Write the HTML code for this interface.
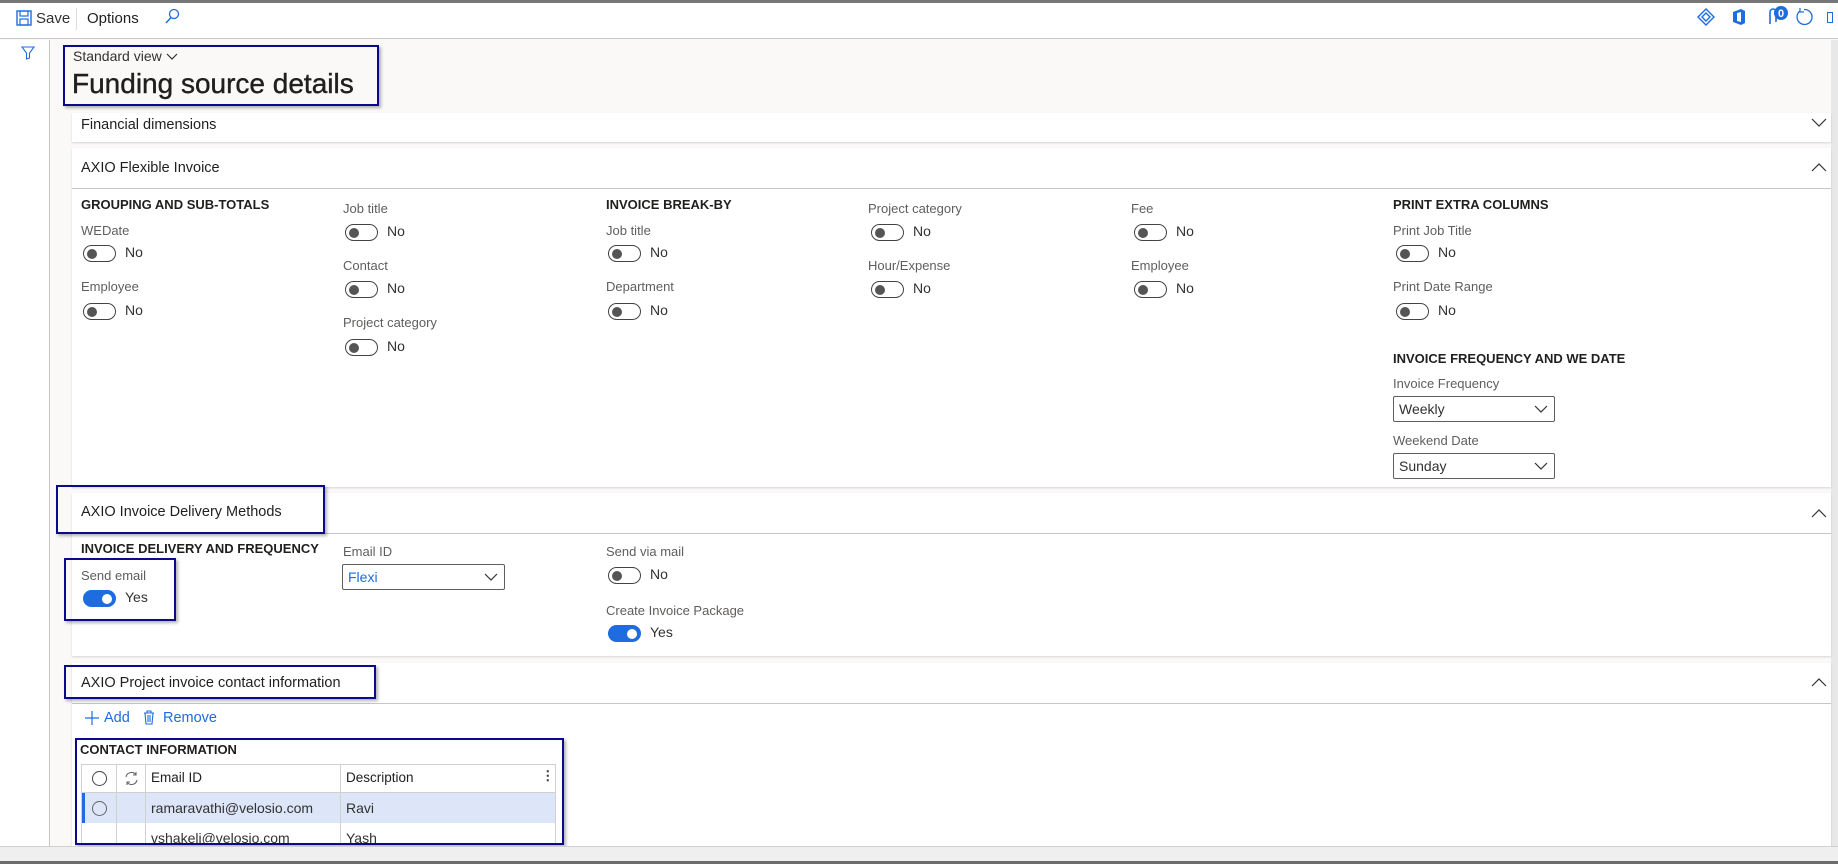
<!DOCTYPE html>
<html><head><meta charset="utf-8"><style>
*{box-sizing:border-box;margin:0;padding:0}
body{width:1838px;height:864px;overflow:hidden;background:#faf9f8;font-family:"Liberation Sans",sans-serif;color:#323130;position:relative}
.a{position:absolute;white-space:nowrap}
.l{position:absolute;font-size:13px;line-height:16px;color:#605e5c;white-space:nowrap}
.h{position:absolute;font-size:13px;line-height:16px;font-weight:bold;color:#201f1e;white-space:nowrap}
.tg{position:absolute;width:33px;height:17px;border:1.5px solid #444;border-radius:9px}
.tg:before{content:"";position:absolute;left:3px;top:2.5px;width:10px;height:10px;border-radius:50%;background:#555}
.tg span{position:absolute;left:41px;top:-2px;font-size:14px;color:#323130}
.tg.on{background:#1e6ce0;border-color:#1e6ce0}
.tg.on:before{left:auto;right:3px;background:#fff}
.card{position:absolute;left:72px;right:7px;background:#fff;box-shadow:0 1px 2px rgba(0,0,0,.15)}
.ct{position:absolute;left:9px;font-size:14.5px;color:#201f1e}
.hl{position:absolute;left:0;right:0;border-top:1px solid #c8c6c4}
.sel{position:absolute;height:26px;border:1px solid #605e5c;border-radius:2px;background:#fff;font-size:14px;line-height:24px;padding-left:5px}
.sel svg{position:absolute;right:6px;top:8px}
.box{position:absolute;border:2px solid #0a0a8a;box-shadow:2px 2px 3px rgba(0,0,0,.3)}
.g{position:absolute;font-size:13.5px;color:#323130}
</style></head><body>
<div class="a" style="left:0;top:0;width:1838px;height:3px;background:#777"></div>
<div class="a" style="left:0;top:3px;width:1838px;height:36px;background:#fff;border-bottom:1px solid #c8c6c4"></div>
<svg class="a" style="left:16px;top:10px" width="16" height="16" viewBox="0 0 16 16"><rect x="1" y="1" width="14" height="14" fill="none" stroke="#1e6ce0" stroke-width="1.4"/><rect x="4" y="1" width="8" height="5" fill="none" stroke="#1e6ce0" stroke-width="1.2"/><rect x="4" y="9" width="8" height="6" fill="none" stroke="#1e6ce0" stroke-width="1.2"/></svg>
<div class="a" style="left:36px;top:10px;font-size:15px">Save</div>
<div class="a" style="left:76px;top:8px;width:1px;height:22px;background:#ddd"></div>
<div class="a" style="left:87px;top:10px;font-size:15px;color:#201f1e">Options</div>
<svg class="a" style="left:164px;top:8px" width="16" height="16" viewBox="0 0 16 16"><circle cx="10" cy="6" r="4.5" fill="none" stroke="#1e6ce0" stroke-width="1.3"/><path d="M7 9.5L2 15" stroke="#1e6ce0" stroke-width="1.4"/></svg>
<svg class="a" style="left:1697px;top:8px" width="18" height="18" viewBox="0 0 18 18"><path d="M9 1L17 9L9 17L1 9Z M9 5L13 9L9 13L5 9Z" fill="none" stroke="#1e6ce0" stroke-width="1.4"/></svg>
<svg class="a" style="left:1731px;top:8px" width="16" height="18" viewBox="0 0 16 18"><path d="M2 4L10 1L14 3V15L10 17L2 14Z" fill="#1e6ce0"/><path d="M6 5L10 4V14L6 13Z" fill="#fff"/></svg>
<svg class="a" style="left:1767px;top:6px" width="22" height="20" viewBox="0 0 22 20"><path d="M3 18V6a3 3 0 0 1 6 0v10" fill="none" stroke="#1e6ce0" stroke-width="1.6"/><circle cx="14" cy="7" r="7" fill="#1e6ce0"/><text x="14" y="11" font-size="11" font-weight="bold" fill="#fff" text-anchor="middle" font-family="Liberation Sans">0</text></svg>
<svg class="a" style="left:1795px;top:8px" width="18" height="18" viewBox="0 0 18 18"><path d="M5 3A7.5 7.5 0 1 0 9 1.5" fill="none" stroke="#1e6ce0" stroke-width="1.3"/><path d="M5 0V4H9" fill="none" stroke="#1e6ce0" stroke-width="1.2"/></svg>
<div class="a" style="left:1827px;top:12px;width:6px;height:11px;border:1.5px solid #1e6ce0"></div>
<div class="a" style="left:0;top:40px;width:50px;height:806px;background:#fff;border-right:1px solid #c8c6c4"></div>
<svg class="a" style="left:21px;top:46px" width="14" height="14" viewBox="0 0 14 14"><path d="M1 1H13L8.5 7V12L5.5 13V7Z" fill="none" stroke="#1e6ce0" stroke-width="1.1"/></svg>
<div class="a" style="left:1831px;top:40px;width:7px;height:806px;background:#e8e8e8"></div>

<div class="box" style="left:63px;top:45px;width:316px;height:61px;background:#faf9f8"></div>
<div class="a" style="left:73px;top:48px;font-size:14px;color:#323130">Standard view <svg width="12" height="8" viewBox="0 0 12 8"><path d="M1 1L6 6L11 1" fill="none" stroke="#323130" stroke-width="1.2"/></svg></div>
<div class="a" style="left:72px;top:68px;font-size:28px;color:#201f1e;-webkit-text-stroke:0.4px #201f1e">Funding source details</div>

<div class="card" style="top:113px;height:29px">
<div class="ct" style="top:4px">Financial dimensions</div>
<svg class="a" style="right:4px;top:5px" width="16" height="10" viewBox="0 0 16 10"><path d="M1 1L8 8L15 1" fill="none" stroke="#323130" stroke-width="1.2"/></svg>
</div>

<div class="card" style="top:148px;height:339px">
<div class="ct" style="top:12px">AXIO Flexible Invoice</div>
<svg class="a" style="right:4px;top:14px" width="16" height="10" viewBox="0 0 16 10"><path d="M1 9L8 2L15 9" fill="none" stroke="#323130" stroke-width="1.2"/></svg>
<div class="hl" style="top:40px"></div>
</div>
<div class="h" style="left:81px;top:197px">GROUPING AND SUB-TOTALS</div>
<div class="l" style="left:81px;top:223px">WEDate</div>
<div class="tg" style="left:83px;top:245px"><span>No</span></div>
<div class="l" style="left:81px;top:279px">Employee</div>
<div class="tg" style="left:83px;top:303px"><span>No</span></div>

<div class="l" style="left:343px;top:201px">Job title</div>
<div class="tg" style="left:345px;top:224px"><span>No</span></div>
<div class="l" style="left:343px;top:258px">Contact</div>
<div class="tg" style="left:345px;top:281px"><span>No</span></div>
<div class="l" style="left:343px;top:315px">Project category</div>
<div class="tg" style="left:345px;top:339px"><span>No</span></div>

<div class="h" style="left:606px;top:197px">INVOICE BREAK-BY</div>
<div class="l" style="left:606px;top:223px">Job title</div>
<div class="tg" style="left:608px;top:245px"><span>No</span></div>
<div class="l" style="left:606px;top:279px">Department</div>
<div class="tg" style="left:608px;top:303px"><span>No</span></div>

<div class="l" style="left:868px;top:201px">Project category</div>
<div class="tg" style="left:871px;top:224px"><span>No</span></div>
<div class="l" style="left:868px;top:258px">Hour/Expense</div>
<div class="tg" style="left:871px;top:281px"><span>No</span></div>

<div class="l" style="left:1131px;top:201px">Fee</div>
<div class="tg" style="left:1134px;top:224px"><span>No</span></div>
<div class="l" style="left:1131px;top:258px">Employee</div>
<div class="tg" style="left:1134px;top:281px"><span>No</span></div>

<div class="h" style="left:1393px;top:197px">PRINT EXTRA COLUMNS</div>
<div class="l" style="left:1393px;top:223px">Print Job Title</div>
<div class="tg" style="left:1396px;top:245px"><span>No</span></div>
<div class="l" style="left:1393px;top:279px">Print Date Range</div>
<div class="tg" style="left:1396px;top:303px"><span>No</span></div>
<div class="h" style="left:1393px;top:351px">INVOICE FREQUENCY AND WE DATE</div>
<div class="l" style="left:1393px;top:376px">Invoice Frequency</div>
<div class="sel" style="left:1393px;top:396px;width:162px">Weekly<svg width="14" height="9" viewBox="0 0 14 9"><path d="M1 1L7 7L13 1" fill="none" stroke="#323130" stroke-width="1.2"/></svg></div>
<div class="l" style="left:1393px;top:433px">Weekend Date</div>
<div class="sel" style="left:1393px;top:453px;width:162px">Sunday<svg width="14" height="9" viewBox="0 0 14 9"><path d="M1 1L7 7L13 1" fill="none" stroke="#323130" stroke-width="1.2"/></svg></div>

<div class="card" style="top:493px;height:163px">
<div class="hl" style="top:40px"></div>
<svg class="a" style="right:4px;top:15px" width="16" height="10" viewBox="0 0 16 10"><path d="M1 9L8 2L15 9" fill="none" stroke="#323130" stroke-width="1.2"/></svg>
</div>
<div class="box" style="left:56px;top:485px;width:269px;height:49px"></div>
<div class="a" style="left:81px;top:504px;font-size:14.5px;color:#201f1e">AXIO Invoice Delivery Methods</div>
<div class="h" style="left:81px;top:541px">INVOICE DELIVERY AND FREQUENCY</div>
<div class="box" style="left:64px;top:558px;width:112px;height:63px"></div>
<div class="l" style="left:81px;top:568px">Send email</div>
<div class="tg on" style="left:83px;top:590px"><span>Yes</span></div>
<div class="l" style="left:343px;top:544px">Email ID</div>
<div class="sel" style="left:342px;top:564px;width:163px;color:#1e6ce0">Flexi<svg width="14" height="9" viewBox="0 0 14 9"><path d="M1 1L7 7L13 1" fill="none" stroke="#323130" stroke-width="1.2"/></svg></div>
<div class="l" style="left:606px;top:544px">Send via mail</div>
<div class="tg" style="left:608px;top:567px"><span>No</span></div>
<div class="l" style="left:606px;top:603px">Create Invoice Package</div>
<div class="tg on" style="left:608px;top:625px"><span>Yes</span></div>

<div class="card" style="top:663px;height:183px">
<div class="hl" style="top:40px"></div>
<svg class="a" style="right:4px;top:14px" width="16" height="10" viewBox="0 0 16 10"><path d="M1 9L8 2L15 9" fill="none" stroke="#323130" stroke-width="1.2"/></svg>
</div>
<div class="box" style="left:64px;top:665px;width:312px;height:34px"></div>
<div class="a" style="left:81px;top:675px;font-size:14.5px;color:#201f1e">AXIO Project invoice contact information</div>
<svg class="a" style="left:85px;top:711px" width="14" height="14" viewBox="0 0 14 14"><path d="M7 0V14M0 7H14" stroke="#1e6ce0" stroke-width="1.2"/></svg>
<div class="a" style="left:104px;top:710px;font-size:14.5px;color:#1e6ce0">Add</div>
<svg class="a" style="left:143px;top:710px" width="12" height="15" viewBox="0 0 12 15"><path d="M1 3H11M4 3V1H8V3M2 3L3 14H9L10 3M5 5V12M7 5V12" fill="none" stroke="#1e6ce0" stroke-width="1.1"/></svg>
<div class="a" style="left:163px;top:710px;font-size:14.5px;color:#1e6ce0">Remove</div>

<div class="box" style="left:75px;top:738px;width:489px;height:107px;background:#fff"></div>
<div class="h" style="left:80px;top:742px;font-size:13px">CONTACT INFORMATION</div>
<div class="a" style="left:81px;top:764px;width:475px;height:79px;border:1px solid #d2d0ce;border-bottom:none;overflow:hidden;background:#fff">
<div class="a" style="left:0;top:28px;width:475px;height:30px;background:#dce6f8"></div>
<div class="a" style="left:0;top:28px;width:3px;height:30px;background:#1e6ce0"></div>
<div class="a" style="left:0;top:27px;width:475px;height:1px;background:#d2d0ce"></div>
<div class="a" style="left:34px;top:0;width:1px;height:80px;background:#d2d0ce"></div>
<div class="a" style="left:63px;top:0;width:1px;height:80px;background:#d2d0ce"></div>
<div class="a" style="left:258px;top:0;width:1px;height:80px;background:#d2d0ce"></div>
<div class="a" style="left:10px;top:6px;width:15px;height:15px;border:1.2px solid #444;border-radius:50%"></div>
<div class="a" style="left:10px;top:36px;width:15px;height:15px;border:1.2px solid #666;border-radius:50%"></div>
<svg class="a" style="left:42px;top:6px" width="15" height="15" viewBox="0 0 15 15"><path d="M2 6A5.5 5.5 0 0 1 12 4M13 9A5.5 5.5 0 0 1 3 11M12 1V4H9M3 14V11H6" fill="none" stroke="#666" stroke-width="1.1"/></svg>
<div class="g" style="left:69px;top:5px;color:#201f1e">Email ID</div>
<div class="g" style="left:264px;top:5px;color:#201f1e">Description</div>
<div class="g" style="left:459px;top:3px;font-weight:bold">⋮</div>
<div class="g" style="left:69px;top:35px;font-size:14px">ramaravathi@velosio.com</div>
<div class="g" style="left:264px;top:35px;font-size:14px">Ravi</div>
<div class="g" style="left:69px;top:65px;font-size:14px">vshakeli@velosio.com</div>
<div class="g" style="left:264px;top:65px;font-size:14px">Yash</div>
</div>

<div class="a" style="left:0;top:846px;width:1838px;height:15px;background:#efefef;border-top:1px solid #d0d0d0"></div>
<div class="a" style="left:0;top:861px;width:1838px;height:3px;background:#6b6b6b"></div>
</body></html>
